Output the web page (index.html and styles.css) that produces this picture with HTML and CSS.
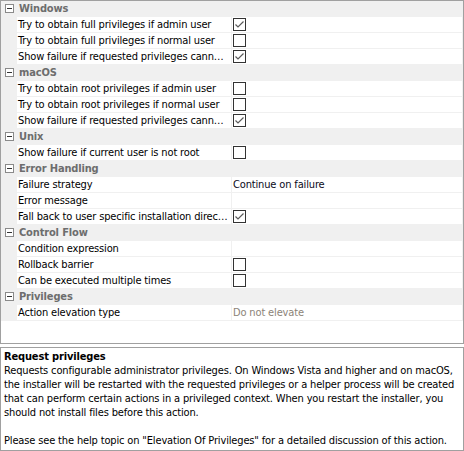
FILE: index.html
```html
<!DOCTYPE html>
<html>
<head>
<meta charset="utf-8">
<link rel="stylesheet" href="styles.css">
</head>
<body>
<div class="grid">
  <div class="cat"><span class="tog"></span><span class="cat-name">Windows</span></div>
  <div class="row"><span class="gut"></span><span class="lbl">Try to obtain full privileges if admin user</span><span class="val"><span class="cb on"><svg viewBox="0 0 11 11" width="11" height="11"><path d="M1.5 5.5 L4 8 L9.5 2.5" fill="none" stroke="#5a5a5a" stroke-width="1.2"/></svg></span></span></div>
  <div class="row"><span class="gut"></span><span class="lbl">Try to obtain full privileges if normal user</span><span class="val"><span class="cb"></span></span></div>
  <div class="row"><span class="gut"></span><span class="lbl">Show failure if requested privileges cann…</span><span class="val"><span class="cb on"><svg viewBox="0 0 11 11" width="11" height="11"><path d="M1.5 5.5 L4 8 L9.5 2.5" fill="none" stroke="#5a5a5a" stroke-width="1.2"/></svg></span></span></div>
  <div class="cat"><span class="tog"></span><span class="cat-name">macOS</span></div>
  <div class="row"><span class="gut"></span><span class="lbl">Try to obtain root privileges if admin user</span><span class="val"><span class="cb"></span></span></div>
  <div class="row"><span class="gut"></span><span class="lbl">Try to obtain root privileges if normal user</span><span class="val"><span class="cb"></span></span></div>
  <div class="row"><span class="gut"></span><span class="lbl">Show failure if requested privileges cann…</span><span class="val"><span class="cb on"><svg viewBox="0 0 11 11" width="11" height="11"><path d="M1.5 5.5 L4 8 L9.5 2.5" fill="none" stroke="#5a5a5a" stroke-width="1.2"/></svg></span></span></div>
  <div class="cat"><span class="tog"></span><span class="cat-name">Unix</span></div>
  <div class="row"><span class="gut"></span><span class="lbl">Show failure if current user is not root</span><span class="val"><span class="cb"></span></span></div>
  <div class="cat"><span class="tog"></span><span class="cat-name">Error Handling</span></div>
  <div class="row"><span class="gut"></span><span class="lbl">Failure strategy</span><span class="val"><span class="txt">Continue on failure</span></span></div>
  <div class="row"><span class="gut"></span><span class="lbl">Error message</span><span class="val"></span></div>
  <div class="row"><span class="gut"></span><span class="lbl">Fall back to user specific installation direc…</span><span class="val"><span class="cb on"><svg viewBox="0 0 11 11" width="11" height="11"><path d="M1.5 5.5 L4 8 L9.5 2.5" fill="none" stroke="#5a5a5a" stroke-width="1.2"/></svg></span></span></div>
  <div class="cat"><span class="tog"></span><span class="cat-name">Control Flow</span></div>
  <div class="row"><span class="gut"></span><span class="lbl">Condition expression</span><span class="val"></span></div>
  <div class="row"><span class="gut"></span><span class="lbl">Rollback barrier</span><span class="val"><span class="cb"></span></span></div>
  <div class="row"><span class="gut"></span><span class="lbl">Can be executed multiple times</span><span class="val"><span class="cb"></span></span></div>
  <div class="cat"><span class="tog"></span><span class="cat-name">Privileges</span></div>
  <div class="row"><span class="gut"></span><span class="lbl">Action elevation type</span><span class="val"><span class="txt dim">Do not elevate</span></span></div>
</div>
<div class="desc">
  <div class="desc-title">Request privileges</div>
  <div class="desc-line">Requests configurable administrator privileges. On Windows Vista and higher and on macOS,</div>
  <div class="desc-line">the installer will be restarted with the requested privileges or a helper process will be created</div>
  <div class="desc-line">that can perform certain actions in a privileged context. When you restart the installer, you</div>
  <div class="desc-line">should not install files before this action.</div>
  <div class="desc-line">&nbsp;</div>
  <div class="desc-line">Please see the help topic on "Elevation Of Privileges" for a detailed discussion of this action.</div>
</div>
</body>
</html>
```

FILE: styles.css
```css
html, body {
  margin: 0;
  padding: 0;
  background: #ffffff;
}
body {
  width: 464px;
  height: 451px;
  font-family: "DejaVu Sans Condensed", "DejaVu Sans", sans-serif;
  font-size: 11px;
  letter-spacing: -0.15px;
  color: #000;
  overflow: hidden;
}
.grid {
  box-sizing: border-box;
  width: 464px;
  height: 344px;
  border: 1px solid #a0a0a0;
  background: #fff;
  display: flex;
  flex-direction: column;
}
.cat {
  height: 16px;
  background: #f0f0f0;
  display: flex;
  align-items: center;
  flex-shrink: 0;
}
.tog {
  box-sizing: border-box;
  width: 9px;
  height: 9px;
  border: 1px solid #8a8a8a;
  background: #fff;
  margin-left: 4px;
  margin-top: -2px;
  position: relative;
}
.tog::after {
  content: "";
  position: absolute;
  left: 1px;
  top: 3px;
  width: 5px;
  height: 1px;
  background: #333;
}
.cat-name {
  margin-left: 5px;
  font-weight: bold;
  color: #6d6d6d;
  line-height: 15px;
  margin-top: -1px;
}
.row {
  height: 16px;
  display: flex;
  flex-shrink: 0;
}
.gut {
  width: 16px;
  background: #f0f0f0;
  flex-shrink: 0;
}
.lbl {
  box-sizing: border-box;
  width: 215px;
  height: 16px;
  padding-left: 1px;
  line-height: 15px;
  border-bottom: 1px solid #f0f0f0;
  border-right: 1px solid #f0f0f0;
  white-space: nowrap;
  overflow: hidden;
  flex-shrink: 0;
}
.val {
  box-sizing: border-box;
  flex: 1;
  height: 16px;
  border-bottom: 1px solid #f0f0f0;
  border-right: 1px solid #f0f0f0;
  display: flex;
  align-items: flex-start;
}
.cb {
  box-sizing: border-box;
  width: 13px;
  height: 13px;
  border: 1px solid #333;
  background: #fff;
  margin-left: 1px;
  margin-top: 1px;
  display: flex;
}
.txt {
  padding-left: 1px;
  line-height: 15px;
  color: #0a0a20;
}
.txt.dim {
  color: #8c8378;
}
.desc {
  box-sizing: border-box;
  width: 464px;
  height: 104px;
  margin-top: 3px;
  border: 1px solid #a0a0a0;
  padding: 2px 3px;
  white-space: nowrap;
  overflow: hidden;
}
.desc-title {
  font-weight: bold;
  line-height: 14px;
}
.desc-line {
  line-height: 14px;
}
```
